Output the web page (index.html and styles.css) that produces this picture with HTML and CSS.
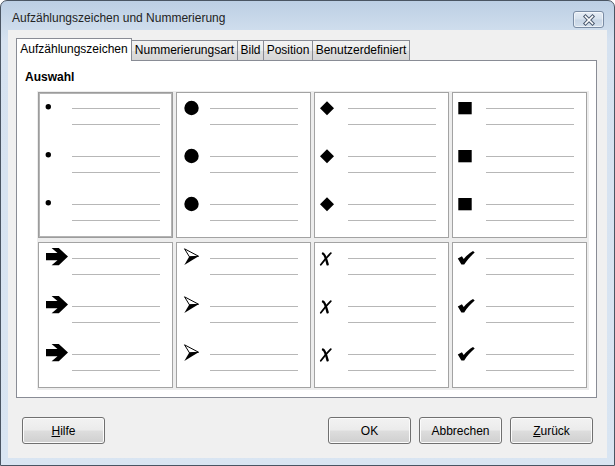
FILE: index.html
```html
<!DOCTYPE html>
<html>
<head>
<meta charset="utf-8">
<link rel="stylesheet" href="styles.css">
</head>
<body>
<div class="window">
  <div class="titlebar">
    <span class="title">Aufzählungszeichen und Nummerierung</span>
    <div class="close">
      <svg width="16" height="12" viewBox="0 0 16 12">
        <path d="M4.5 2.5 L11.5 9.5 M11.5 2.5 L4.5 9.5" stroke="#4a596e" stroke-width="3.6" stroke-linecap="square"/>
        <path d="M4.5 2.5 L11.5 9.5 M11.5 2.5 L4.5 9.5" stroke="#ffffff" stroke-width="1.6" stroke-linecap="square"/>
      </svg>
    </div>
  </div>
  <div class="client">
    <div class="tabs">
      <div class="tab active t1">Aufzählungszeichen</div>
      <div class="tab t2">Nummerierungsart</div>
      <div class="tab t3">Bild</div>
      <div class="tab t4">Position</div>
      <div class="tab t5">Benutzerdefiniert</div>
    </div>
    <div class="panel">
      <div class="label">Auswahl</div>
      <div class="grid">
        <div class="cell selected">
          <div class="item"><svg class="mark" viewBox="0 0 33 24"><circle cx="9.3" cy="10.8" r="2.7"/></svg><div class="lines"><i></i><i></i></div></div>
          <div class="item"><svg class="mark" viewBox="0 0 33 24"><circle cx="9.3" cy="10.8" r="2.7"/></svg><div class="lines"><i></i><i></i></div></div>
          <div class="item"><svg class="mark" viewBox="0 0 33 24"><circle cx="9.3" cy="10.8" r="2.7"/></svg><div class="lines"><i></i><i></i></div></div>
        </div>
        <div class="cell">
          <div class="item"><svg class="mark" viewBox="0 0 33 24"><circle cx="14.5" cy="12" r="7.2"/></svg><div class="lines"><i></i><i></i></div></div>
          <div class="item"><svg class="mark" viewBox="0 0 33 24"><circle cx="14.5" cy="12" r="7.2"/></svg><div class="lines"><i></i><i></i></div></div>
          <div class="item"><svg class="mark" viewBox="0 0 33 24"><circle cx="14.5" cy="12" r="7.2"/></svg><div class="lines"><i></i><i></i></div></div>
        </div>
        <div class="cell">
          <div class="item"><svg class="mark" viewBox="0 0 33 24"><polygon points="12,5.3 19,12.3 12,19.3 5,12.3"/></svg><div class="lines"><i></i><i></i></div></div>
          <div class="item"><svg class="mark" viewBox="0 0 33 24"><polygon points="12,5.3 19,12.3 12,19.3 5,12.3"/></svg><div class="lines"><i></i><i></i></div></div>
          <div class="item"><svg class="mark" viewBox="0 0 33 24"><polygon points="12,5.3 19,12.3 12,19.3 5,12.3"/></svg><div class="lines"><i></i><i></i></div></div>
        </div>
        <div class="cell">
          <div class="item"><svg class="mark" viewBox="0 0 33 24"><rect x="5.3" y="6" width="13.4" height="12.3"/></svg><div class="lines"><i></i><i></i></div></div>
          <div class="item"><svg class="mark" viewBox="0 0 33 24"><rect x="5.3" y="6" width="13.4" height="12.3"/></svg><div class="lines"><i></i><i></i></div></div>
          <div class="item"><svg class="mark" viewBox="0 0 33 24"><rect x="5.3" y="6" width="13.4" height="12.3"/></svg><div class="lines"><i></i><i></i></div></div>
        </div>

        <div class="cell">
          <div class="item"><svg class="mark" viewBox="0 0 33 24"><path d="M7 7 H18.5 L12.6 2 H19.8 L29 10.6 L19.8 19.2 H12.6 L18.5 14.2 H7 Z"/></svg><div class="lines"><i></i><i></i></div></div>
          <div class="item"><svg class="mark" viewBox="0 0 33 24"><path d="M7 7 H18.5 L12.6 2 H19.8 L29 10.6 L19.8 19.2 H12.6 L18.5 14.2 H7 Z"/></svg><div class="lines"><i></i><i></i></div></div>
          <div class="item"><svg class="mark" viewBox="0 0 33 24"><path d="M7 7 H18.5 L12.6 2 H19.8 L29 10.6 L19.8 19.2 H12.6 L18.5 14.2 H7 Z"/></svg><div class="lines"><i></i><i></i></div></div>
        </div>
        <div class="cell">
          <div class="item"><svg class="mark" viewBox="0 0 33 24"><polygon points="7.5,2.8 21.5,10.2 12.5,10.9" fill="#fff" stroke="#000" stroke-width="1"/><polygon points="12.3,10.6 22,10 7.3,19"/></svg><div class="lines"><i></i><i></i></div></div>
          <div class="item"><svg class="mark" viewBox="0 0 33 24"><polygon points="7.5,2.8 21.5,10.2 12.5,10.9" fill="#fff" stroke="#000" stroke-width="1"/><polygon points="12.3,10.6 22,10 7.3,19"/></svg><div class="lines"><i></i><i></i></div></div>
          <div class="item"><svg class="mark" viewBox="0 0 33 24"><polygon points="7.5,2.8 21.5,10.2 12.5,10.9" fill="#fff" stroke="#000" stroke-width="1"/><polygon points="12.3,10.6 22,10 7.3,19"/></svg><div class="lines"><i></i><i></i></div></div>
        </div>
        <div class="cell">
          <div class="item"><svg class="mark" viewBox="0 0 33 24"><path d="M8 7.6 C10 8.3 11 12 12.6 18.4" fill="none" stroke="#000" stroke-width="2.4" stroke-linecap="round"/><path d="M15.8 7.2 C12.5 10.5 9 14.5 5.8 18.8" fill="none" stroke="#000" stroke-width="1.8" stroke-linecap="round"/></svg><div class="lines"><i></i><i></i></div></div>
          <div class="item"><svg class="mark" viewBox="0 0 33 24"><path d="M8 7.6 C10 8.3 11 12 12.6 18.4" fill="none" stroke="#000" stroke-width="2.4" stroke-linecap="round"/><path d="M15.8 7.2 C12.5 10.5 9 14.5 5.8 18.8" fill="none" stroke="#000" stroke-width="1.8" stroke-linecap="round"/></svg><div class="lines"><i></i><i></i></div></div>
          <div class="item"><svg class="mark" viewBox="0 0 33 24"><path d="M8 7.6 C10 8.3 11 12 12.6 18.4" fill="none" stroke="#000" stroke-width="2.4" stroke-linecap="round"/><path d="M15.8 7.2 C12.5 10.5 9 14.5 5.8 18.8" fill="none" stroke="#000" stroke-width="1.8" stroke-linecap="round"/></svg><div class="lines"><i></i><i></i></div></div>
        </div>
        <div class="cell">
          <div class="item"><svg class="mark" viewBox="0 0 33 24"><path d="M4.8 12.6 L8.9 10.2 L10.7 13 C13.6 9.5 16.6 7 20 5 L21.7 6.6 C17.6 10 14.2 14 11.2 18.5 L8.4 18.5 Z"/></svg><div class="lines"><i></i><i></i></div></div>
          <div class="item"><svg class="mark" viewBox="0 0 33 24"><path d="M4.8 12.6 L8.9 10.2 L10.7 13 C13.6 9.5 16.6 7 20 5 L21.7 6.6 C17.6 10 14.2 14 11.2 18.5 L8.4 18.5 Z"/></svg><div class="lines"><i></i><i></i></div></div>
          <div class="item"><svg class="mark" viewBox="0 0 33 24"><path d="M4.8 12.6 L8.9 10.2 L10.7 13 C13.6 9.5 16.6 7 20 5 L21.7 6.6 C17.6 10 14.2 14 11.2 18.5 L8.4 18.5 Z"/></svg><div class="lines"><i></i><i></i></div></div>
        </div>
      </div>
    </div>
    <div class="buttons">
      <button class="btn help"><u>H</u>ilfe</button>
      <button class="btn">OK</button>
      <button class="btn">Abbrechen</button>
      <button class="btn"><u>Z</u>urück</button>
    </div>
  </div>
</div>
</body>
</html>
```

FILE: styles.css
```css
html, body {
  margin: 0;
  padding: 0;
  background: #ffffff;
}

body {
  font-family: "Liberation Sans", Arial, sans-serif;
  font-size: 12px;
  color: #000;
}

.window {
  box-sizing: border-box;
  width: 615px;
  height: 466px;
  border: 1px solid #4a5563;
  border-radius: 7px 7px 0 0;
  background: linear-gradient(to bottom, #bccfe4 0px, #c9d9ea 20px, #d6e2f0 40px, #d9e5f2 100%);
  padding: 0 7px 7px 7px;
  display: flex;
  flex-direction: column;
}

.titlebar {
  height: 29px;
  display: flex;
  align-items: flex-start;
}

.title {
  margin-top: 10px;
  margin-left: 4px;
  line-height: 15px;
  color: #232323;
}

.close {
  box-sizing: border-box;
  margin-left: auto;
  margin-right: 3px;
  margin-top: 10px;
  width: 31px;
  height: 17px;
  border: 1px solid #7a8ca4;
  border-radius: 3px;
  background: linear-gradient(to bottom, #e6edf5 0%, #d6e1ed 48%, #c7d5e5 52%, #d3dfec 100%);
  box-shadow: inset 0 0 0 1px rgba(255, 255, 255, 0.55);
  display: flex;
  align-items: center;
  justify-content: center;
}

.client {
  height: 428px;
  background: #f0f0f0;
  display: flex;
  flex-direction: column;
}

.tabs {
  display: flex;
  align-items: flex-end;
  height: 22px;
  margin: 8px 0 0 8px;
  position: relative;
  z-index: 1;
}

.tab {
  box-sizing: border-box;
  height: 20px;
  border: 1px solid #898c95;
  border-bottom: none;
  margin-left: -1px;
  background: linear-gradient(to bottom, #f3f3f3 0%, #ebebeb 50%, #dedede 51%, #d6d6d6 100%);
  text-align: center;
  line-height: 19px;
  white-space: nowrap;
}

.tab.active {
  height: 23px;
  margin-bottom: -1px;
  margin-left: 0;
  background: #ffffff;
  line-height: 20px;
}

.t1 { width: 116px; }
.t2 { width: 107px; }
.t3 { width: 27px; }
.t4 { width: 50px; }
.t5 { width: 98px; }

.panel {
  box-sizing: border-box;
  height: 338px;
  margin: 0 10px 0 8px;
  border: 1px solid #898c95;
  background: #ffffff;
  padding: 9px 8px 0 8px;
}

.label {
  font-weight: bold;
  line-height: 15px;
  height: 15px;
}

.grid {
  margin: 6px 0 0 12px;
  width: 552px;
  box-sizing: border-box;
  padding: 1px 2px 2px 1px;
  background: #ededed;
  display: grid;
  grid-template-columns: repeat(4, 135px);
  grid-template-rows: repeat(2, 146px);
  column-gap: 3px;
  row-gap: 4px;
}

.cell {
  box-sizing: border-box;
  border: 1px solid #a3a3a3;
  background: #ffffff;
  padding-top: 15px;
}

.cell.selected {
  border-color: #9c9c9c;
  box-shadow: inset 0 0 0 1px #b4b4b4;
}

.item {
  display: flex;
  height: 48px;
}

.mark {
  display: block;
  width: 33px;
  height: 24px;
  margin-top: -12px;
  flex: none;
  fill: #000;
}

.lines {
  width: 88px;
}

.lines i {
  display: block;
  height: 1px;
  background: #b7b7b7;
  margin-bottom: 15px;
}

.buttons {
  display: flex;
  gap: 8px;
  margin-top: 19px;
  padding: 0 14px;
}

.btn {
  box-sizing: border-box;
  width: 83px;
  height: 27px;
  border: 1px solid #707070;
  border-radius: 3px;
  background: linear-gradient(to bottom, #f2f2f2 0%, #ebebeb 48%, #dddddd 52%, #cfcfcf 100%);
  box-shadow: inset 0 0 0 1px #fbfbfb;
  font-family: "Liberation Sans", Arial, sans-serif;
  font-size: 12px;
  color: #000;
  padding: 0;
}

.btn.help {
  margin-right: auto;
}
```
